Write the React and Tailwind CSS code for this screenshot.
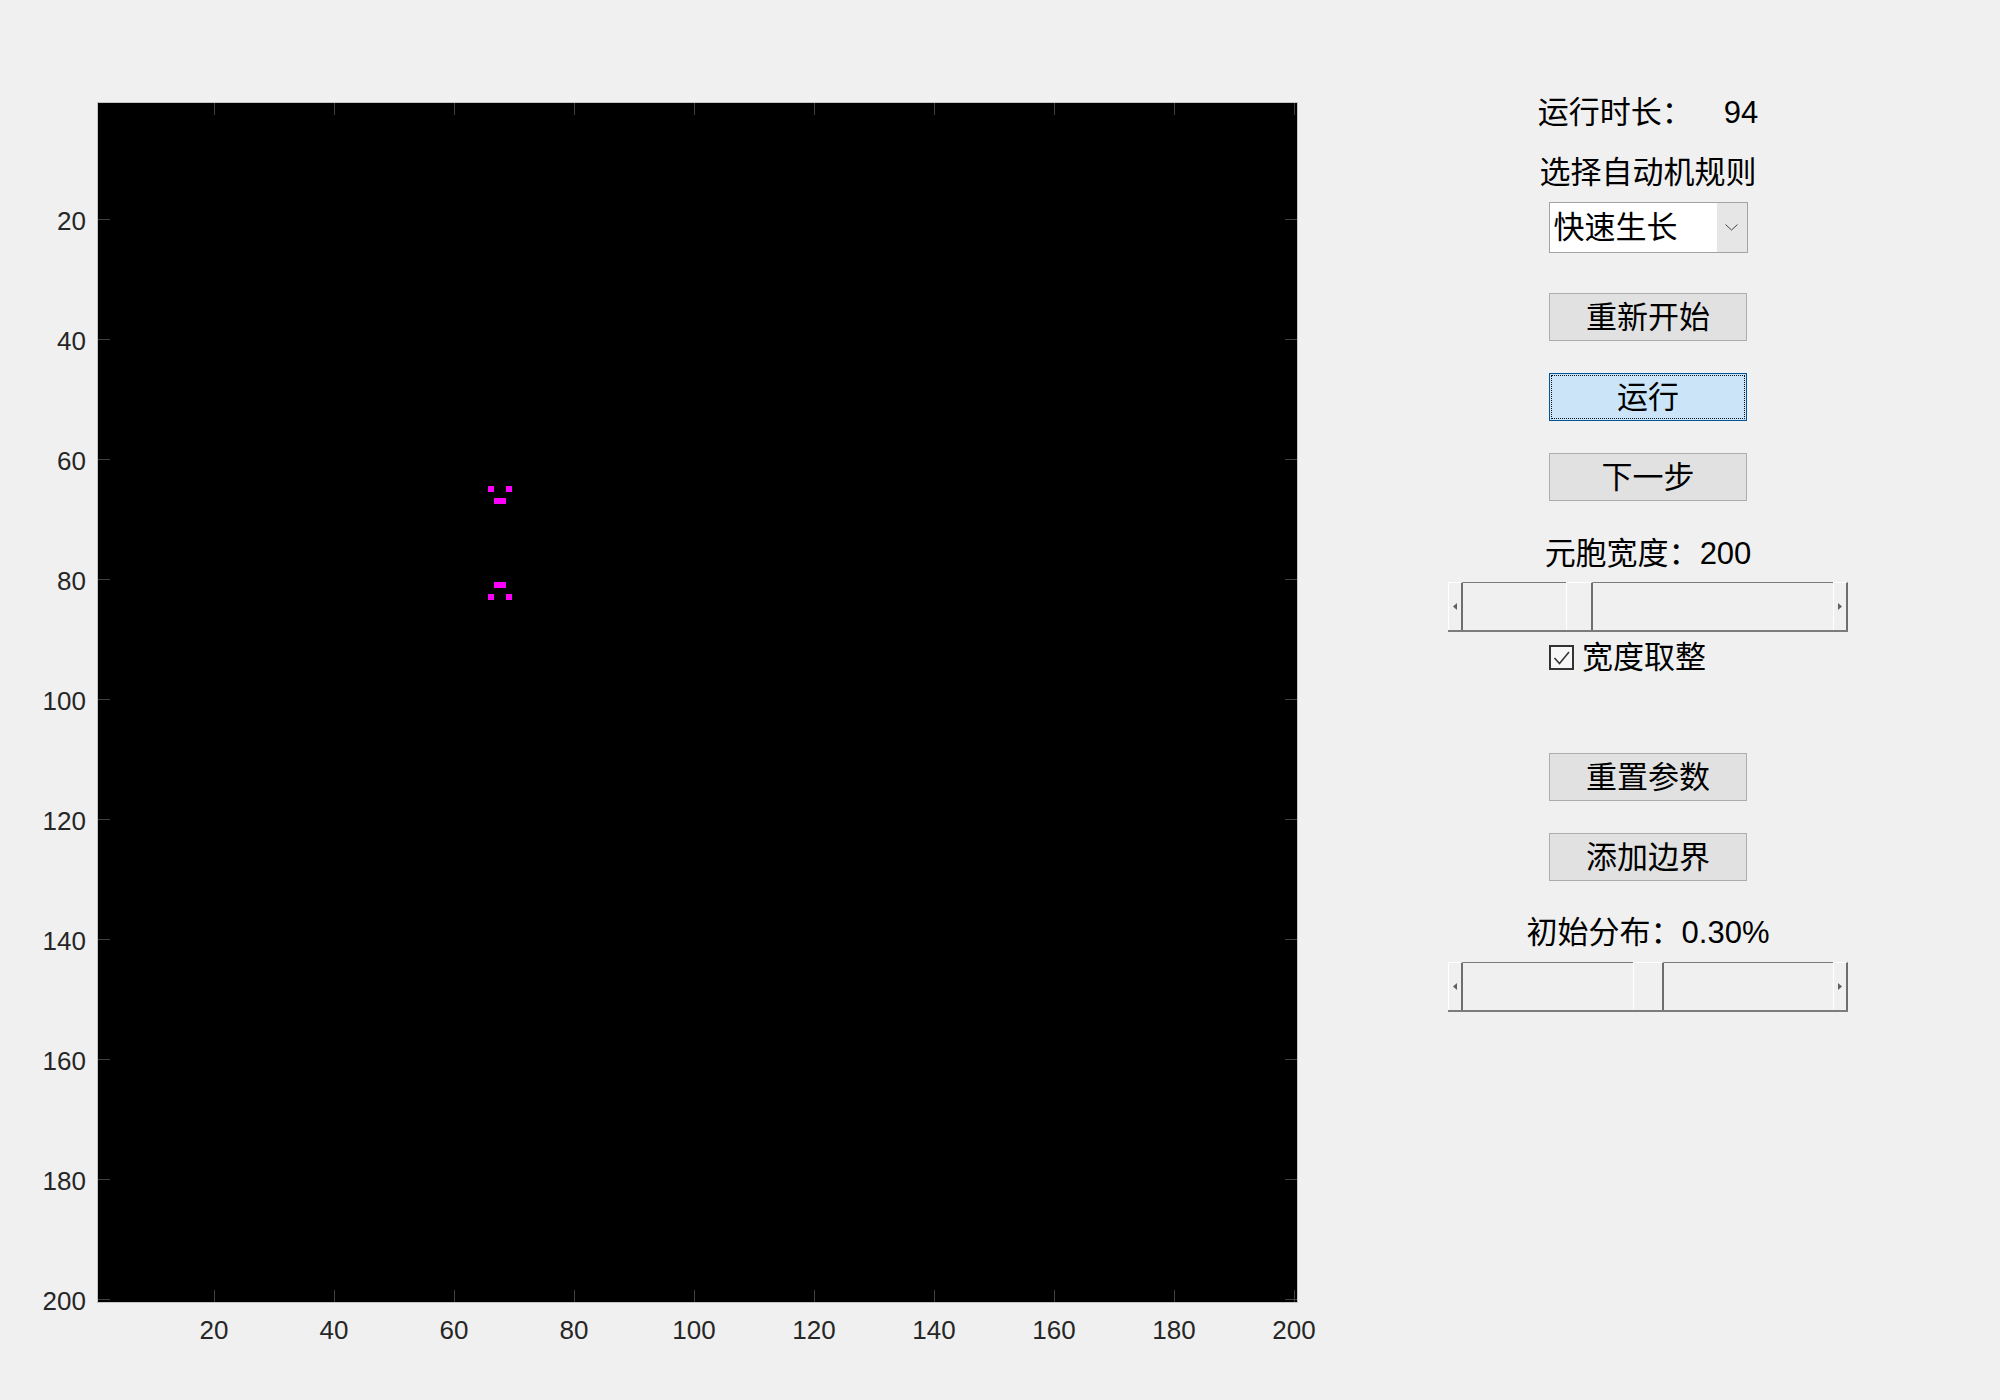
import clsx from "clsx";

const cjk = "font-['Noto_Sans_CJK_SC',sans-serif]";
const num = "font-['Liberation_Sans',Arial,sans-serif]";
// Noto CJK sits a little low compared to the original UI font
const lift = "relative -top-[3px]";

const ticks = [20, 40, 60, 80, 100, 120, 140, 160, 180, 200];
const cellSize = 6;
const tickPos = (v) => (v - 0.5) * cellSize;

// live cells (pixel offsets inside the image)
const cells = [
  [391, 384], [409, 384], [397, 396], [403, 396],
  [397, 480], [403, 480], [391, 492], [409, 492]
];

function Axes() {
  return (
    <div className="relative ml-[97px] mt-[102px] h-[1201px] w-[1201px]">
      <svg width="1201" height="1201" className="block">
        <rect x="0" y="0" width="1201" height="1201" fill="#000" />
        {cells.map(([x, y], i) => (
          <rect key={i} x={x} y={y} width={cellSize} height={cellSize} fill="#ff00ff" />
        ))}
        {ticks.map((v) => {
          const p = tickPos(v) + 0.5;
          return (
            <g key={v} stroke="#404040" strokeWidth="1">
              <line x1="0" x2="13" y1={p} y2={p} />
              <line x1="1188" x2="1201" y1={p} y2={p} />
              <line y1="0" y2="13" x1={p} x2={p} />
              <line y1="1188" y2="1201" x1={p} x2={p} />
            </g>
          );
        })}
        <rect x="0.5" y="0.5" width="1200" height="1200" fill="none" stroke="#c4c4c4" />
      </svg>

      {ticks.map((v) => (
        <span
          key={"y" + v}
          className={clsx("absolute right-full mr-[11px] -translate-y-1/2 text-[26px] leading-none text-[#262626]", num)}
          style={{ top: tickPos(v) + 2 }}
        >
          {v}
        </span>
      ))}
      {ticks.map((v) => (
        <span
          key={"x" + v}
          className={clsx("absolute top-full mt-[14px] -translate-x-1/2 text-[26px] leading-none text-[#262626]", num)}
          style={{ left: tickPos(v) }}
        >
          {v}
        </span>
      ))}
    </div>
  );
}

function Btn({ children, active, className }) {
  return (
    <button
      className={clsx(
        "relative flex h-[48px] w-[198px] items-center justify-center border text-[31px] leading-none text-black",
        cjk,
        active ? "border-[#005499] bg-[#cce4f7]" : "border-[#adadad] bg-[#e1e1e1]",
        className
      )}
    >
      {active && <span className="absolute inset-[1px] border border-dotted border-[#111]" />}
      <span className={lift}>{children}</span>
    </button>
  );
}

function ArrowBtn({ dir }) {
  return (
    <div className="flex h-full w-[15px] items-center justify-center border-l border-t border-white border-r-2 border-r-[#6e6e6e]">
      <svg width="4" height="7" viewBox="0 0 4 7">
        {dir === "left" ? (
          <path d="M4 0 L0 3.5 L4 7 Z" fill="#606060" />
        ) : (
          <path d="M0 0 L4 3.5 L0 7 Z" fill="#606060" />
        )}
      </svg>
    </div>
  );
}

function Slider({ value, min, max, thumb, className }) {
  const track = 370;
  const before = ((value - min) / (max - min)) * (track - thumb);
  return (
    <div className={clsx("flex h-[50px] w-[400px] border-b-2 border-[#7c7c7c]", className)}>
      <ArrowBtn dir="left" />
      <div className="h-full border-t border-[#7c7c7c]" style={{ width: before }} />
      <div
        className="h-full border-l border-t border-white border-r-2 border-r-[#6e6e6e]"
        style={{ width: thumb }}
      />
      <div className="h-full flex-1 border-t border-[#7c7c7c]" />
      <ArrowBtn dir="right" />
    </div>
  );
}

function ControlPanel() {
  return (
    <div className="ml-[150px] flex w-[400px] flex-col items-center pt-[92px] text-black">
      <div className="flex h-[40px] items-center leading-none">
        <span className={clsx("text-[31px]", cjk, lift)}>运行时长：</span>
        <span className={clsx("ml-[31px] text-[31px]", num)}>94</span>
      </div>
      <div className="mt-[20px] flex h-[40px] items-center leading-none">
        <span className={clsx("text-[31px]", cjk, lift)}>选择自动机规则</span>
      </div>

      <div className="mt-[10px] flex h-[51px] w-[199px] border border-[#a3a3a3] bg-white">
        <span className="flex flex-1 items-center pl-[4px] leading-none">
          <span className={clsx("text-[31px]", cjk, lift)}>快速生长</span>
        </span>
        <span className="flex w-[30px] items-center justify-center bg-[#e6e6e6]">
          <svg width="13" height="7" viewBox="0 0 13 7">
            <path d="M0.5 0.5 L6.5 6 L12.5 0.5" fill="none" stroke="#444" strokeWidth="1" />
          </svg>
        </span>
      </div>

      <Btn className="mt-[40px]">重新开始</Btn>
      <Btn className="mt-[32px]" active>运行</Btn>
      <Btn className="mt-[32px]">下一步</Btn>

      <div className="mt-[32px] flex h-[40px] items-center leading-none">
        <span className={clsx("text-[31px]", cjk, lift)}>元胞宽度：</span>
        <span className={clsx("text-[31px]", num)}>200</span>
      </div>
      <Slider className="mt-[9px]" value={200} min={50} max={550} thumb={27} />

      <label className="mt-[10px] flex h-[30px] w-[198px] items-center gap-[8px]">
        <svg width="25" height="25" viewBox="0 0 25 25">
          <rect x="1" y="1" width="23" height="23" fill="#f7f7f7" stroke="#333" strokeWidth="2" />
          <path d="M5.5 13 L10.5 18.5 L20 7" fill="none" stroke="#333" strokeWidth="1.5" />
        </svg>
        <span className={clsx("text-[31px] leading-none", cjk, lift)}>宽度取整</span>
      </label>

      <Btn className="mt-[81px]">重置参数</Btn>
      <Btn className="mt-[32px]">添加边界</Btn>

      <div className="mt-[31px] flex h-[40px] items-center leading-none">
        <span className={clsx("text-[31px]", cjk, lift)}>初始分布：</span>
        <span className={clsx("text-[31px]", num)}>0.30%</span>
      </div>
      <Slider className="mt-[10px]" value={0.3} min={0} max={0.6} thumb={31} />
    </div>
  );
}

export default function App() {
  return (
    <div className="flex h-[1400px] w-[2000px] bg-[#f0f0f0]">
      <Axes />
      <ControlPanel />
    </div>
  );
}
